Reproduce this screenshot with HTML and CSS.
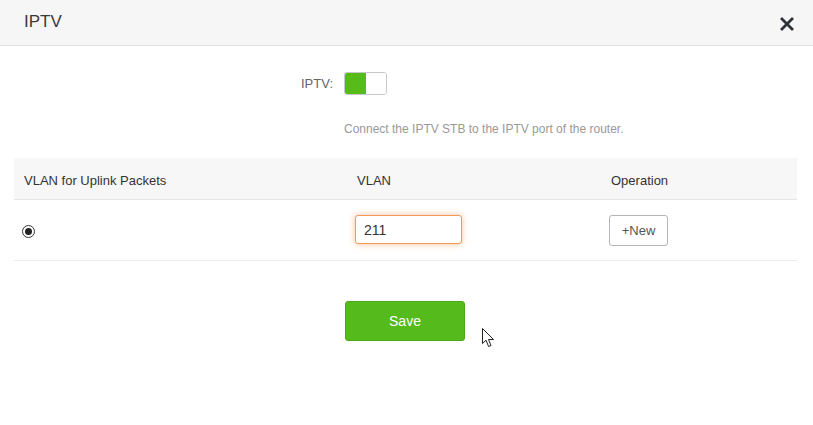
FILE: index.html
```html
<!DOCTYPE html>
<html>
<head>
<meta charset="utf-8">
<link rel="stylesheet" href="styles.css">
</head>
<body>
<div class="dialog">
  <div class="header">
    <span class="title">IPTV</span>
    <svg class="close" width="14" height="14" viewBox="0 0 14 14"><path d="M2 2 L12 12 M12 2 L2 12" stroke="#2f3338" stroke-width="2.8" stroke-linecap="square"/></svg>
  </div>
  <div class="content">
    <div class="form-row">
      <label class="label">IPTV:</label>
      <div class="toggle"><span class="toggle-on"></span><span class="toggle-off"></span></div>
    </div>
    <div class="hint">Connect the IPTV STB to the IPTV port of the router.</div>
    <div class="table">
      <div class="thead">
        <div class="th">VLAN for Uplink Packets</div>
        <div class="th">VLAN</div>
        <div class="th">Operation</div>
      </div>
      <div class="trow">
        <div class="td"><span class="radio"><span class="dot"></span></span></div>
        <div class="td td-vlan"><input class="vlan-input" type="text" value="211"></div>
        <div class="td td-op"><button class="btn-new">+New</button></div>
      </div>
    </div>
    <div class="actions">
      <button class="btn-save">Save</button>
    </div>
  </div>
  <svg class="cursor" width="13" height="20" viewBox="0 0 13 20"><path d="M0.5 0.5 L0.5 15.5 L4 12.2 L6.6 18.5 L9 17.5 L6.5 11.5 L11.5 11.5 Z" fill="#fff" stroke="#222" stroke-width="1" stroke-linejoin="miter"/></svg>
</div>
</body>
</html>
```

FILE: styles.css
```css
* { box-sizing: border-box; }
html, body { margin: 0; padding: 0; background: #fff; }
body {
  font-family: "Liberation Sans", Arial, sans-serif;
  color: #333;
  width: 813px;
  height: 425px;
  overflow: hidden;
}
.dialog { position: relative; width: 813px; height: 425px; }
.header {
  height: 46px;
  background: #f6f6f6;
  border-bottom: 1px solid #e2e2e2;
  display: flex;
  align-items: center;
  justify-content: space-between;
  padding: 0 19px 0 24px;
}
.title { font-size: 17px; color: #3a3a3a; margin-top: -2px; }
.close { display: block; margin-top: 2px; }
.content { padding: 0 16px 0 14px; }
.form-row {
  display: flex;
  align-items: center;
  margin-top: 26px;
  height: 23px;
}
.label {
  width: 319px;
  text-align: right;
  font-size: 13px;
  color: #666;
  margin-right: 11px;
}
.toggle {
  width: 43px;
  height: 23px;
  border: 1px solid #c8c8c8;
  border-radius: 3px;
  display: flex;
  overflow: hidden;
  background: #fff;
}
.toggle-on { width: 21px; background: #57bb1a; }
.toggle-off { flex: 1; background: #fff; }
.hint {
  margin-left: 330px;
  margin-top: 27px;
  font-size: 12px;
  color: #999;
  line-height: 14px;
}
.table { margin-top: 22px; }
.thead {
  display: grid;
  grid-template-columns: 333px 254px 1fr;
  height: 42px;
  background: #f7f7f7;
  border-bottom: 1px solid #e4e4e4;
  align-items: center;
}
.th { font-size: 13px; color: #333; padding-left: 10px; padding-top: 3px; }
.trow {
  display: grid;
  grid-template-columns: 333px 254px 1fr;
  height: 61px;
  border-bottom: 1px solid #ececec;
  align-items: center;
}
.td { padding-left: 8px; display: flex; align-items: center; }
.radio {
  width: 13px;
  height: 13px;
  border: 1px solid #333;
  border-radius: 50%;
  display: flex;
  align-items: center;
  justify-content: center;
  margin-top: 3px;
}
.dot { width: 7px; height: 7px; border-radius: 50%; background: #222; }
.vlan-input {
  width: 107px;
  height: 29px;
  border: 1px solid #ee9a5c;
  border-radius: 3px;
  box-shadow: 0 0 6px rgba(245, 140, 60, 0.55);
  font-family: "Liberation Sans", Arial, sans-serif;
  font-size: 14px;
  color: #333;
  padding: 0 8px;
  outline: none;
  margin-top: -1px;
}
.btn-new {
  width: 59px;
  height: 31px;
  border: 1px solid #b5b5b5;
  border-radius: 3px;
  background: #fff;
  font-family: "Liberation Sans", Arial, sans-serif;
  font-size: 13px;
  color: #555;
  margin-top: 1px;
  padding: 0;
}
.actions { margin-top: 40px; padding-left: 331px; }
.btn-save {
  width: 120px;
  height: 40px;
  background: #55ba1b;
  border: 1px solid #4caa16;
  border-radius: 3px;
  color: #fff;
  font-family: "Liberation Sans", Arial, sans-serif;
  font-size: 14px;
  padding: 0;
}
.cursor { position: absolute; left: 482px; top: 328px; }
```
